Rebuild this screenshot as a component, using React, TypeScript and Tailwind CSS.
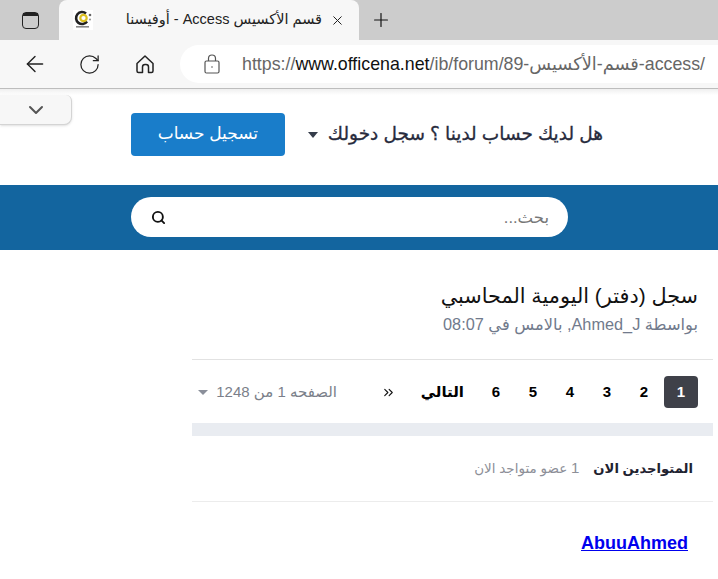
import { ChevronDown, Plus, RotateCw, Search, X, ArrowLeft, ChevronsRight } from "lucide-react"

const font = { fontFamily: '"Liberation Sans", "DejaVu Sans", sans-serif' }

function Favicon() {
  return (
    <svg width="20" height="20" viewBox="0 0 20 20" className="bg-white">
      <path d="M13 3.5a6 6 0 1 0 1 8" fill="none" stroke="#222" strokeWidth="2.6" />
      <circle cx="10.5" cy="8" r="3.2" fill="none" stroke="#dcc020" strokeWidth="2.2" />
      <circle cx="17" cy="5" r="1.3" fill="#666" />
      <circle cx="17" cy="9.5" r="1.1" fill="#999" />
      <rect x="3" y="16" width="13" height="1.6" fill="#888" />
    </svg>
  )
}

function HomeIcon() {
  return (
    <svg width="22" height="22" viewBox="0 0 22 22" fill="none" stroke="#222" strokeWidth="1.5" strokeLinejoin="round">
      <path d="M3 10.5 11 3l8 7.5V18a1.5 1.5 0 0 1-1.5 1.5h-3V14a2.5 2.5 0 0 0-2.5-2.5h-1A2.5 2.5 0 0 0 8.500 14v5.500h-4A1.500 1.500 0 0 1 3 18z" />
    </svg>
  )
}

function LockIcon() {
  return (
    <svg width="16" height="20" viewBox="0 0 16 20" fill="none" stroke="#555" strokeWidth="1.2">
      <rect x="1" y="7" width="14" height="12" rx="1.5" />
      <path d="M4.500 7V4.500a3.500 3.500 0 0 1 7 0V7" />
      <circle cx="8" cy="13" r="0.8" fill="#555" stroke="none" />
    </svg>
  )
}

function BrowserBar() {
  return (
    <div>
      <div className="flex h-10 bg-[#cccccc]">
        <div className="flex w-[59px] items-center justify-center pl-[2px]">
          <div className="h-[17px] w-[17px] rounded-[4px] border-[1.5px] border-[#222]">
            <div className="h-[3px] bg-[#222]" />
          </div>
        </div>
        <div className="flex w-[300px] items-center rounded-t-[8px] bg-[#f7f7f7] pl-[14px] pr-[14px]">
          <Favicon />
          <span dir="rtl" className="ml-[32px] w-[197px] whitespace-nowrap text-[14.500px] text-[#222]">
            قسم الأكسيس Access - أوفيسنا
          </span>
          <X size={15} strokeWidth={1.6} className="ml-auto text-[#222]" />
        </div>
        <div className="flex w-[44px] items-center justify-center">
          <Plus size={22} strokeWidth={1.3} className="text-[#111]" />
        </div>
      </div>
      <div className="flex h-[48px] items-center bg-[#f7f7f7] pl-[22px]">
        <ArrowLeft size={26} strokeWidth={1.3} className="text-[#222]" />
        <RotateCw size={23} strokeWidth={1.3} className="ml-[30px] text-[#222]" />
        <div className="ml-[33px]">
          <HomeIcon />
        </div>
        <div className="ml-[24px] flex h-[38px] flex-1 items-center rounded-l-full bg-white pl-6">
          <LockIcon />
          <div className="ml-[22px] whitespace-nowrap text-[17.800px] text-[#666]">
            https://<span className="text-[#111]">www.officena.net</span>/ib/forum/89-قسم-الأكسيس-access/
          </div>
        </div>
      </div>
      <div className="h-[1px] bg-[#bdbdbd]" />
    </div>
  )
}

function PageLink({ label, active }: { label: string; active?: boolean }) {
  return (
    <div
      className={
        active
          ? "flex h-8 w-[34px] items-center justify-center rounded bg-[#3f4149] text-[15px] font-bold text-white"
          : "flex h-8 w-[34px] items-center justify-center text-[15px] font-bold text-black"
      }
    >
      {label}
    </div>
  )
}

export default function App() {
  return (
    <div className="h-[579px] w-[718px] overflow-hidden bg-white" style={font}>
      <BrowserBar />
      <div className="relative">
        <div className="absolute inset-x-0 top-0 h-[6px] bg-gradient-to-b from-[#efefef] to-white" />
        <div className="absolute left-0 top-[6px] flex h-[30px] w-[72px] items-center justify-center rounded-br-[8px] rounded-tr-[6px] border-b border-r border-[#d4d4d4] bg-[#f7f7f7] shadow-sm">
          <ChevronDown size={24} strokeWidth={2} className="text-[#555]" />
        </div>

        <div dir="rtl" className="flex h-[96px] items-center gap-[23px] pb-[6px] pr-[115px]">
          <div className="flex items-center gap-[10px] text-[18.500px] text-[#272b3d] [-webkit-text-stroke:0.3px_#272b3d]">
            <span>هل لديك حساب لدينا ؟ سجل دخولك</span>
            <span className="mt-[1px] h-0 w-0 border-x-[5.500px] border-t-[6px] border-x-transparent border-t-[#353c4a]" />
          </div>
          <div className="flex h-[43px] w-[154px] items-center justify-center rounded bg-[#197dca] text-[17px] text-white">
            تسجيل حساب
          </div>
        </div>

        <div className="flex h-[65px] items-center bg-[#13659f] pb-[1px] pl-[131px]">
          <div className="flex h-10 w-[437px] items-center justify-between rounded-full bg-white pl-5 pr-[19px]">
            <Search size={15} strokeWidth={3} className="text-[#111]" />
            <span dir="rtl" className="text-[16.500px] text-[#777]">بحث...</span>
          </div>
        </div>

        <div dir="rtl" className="px-5 pt-[33px]">
          <div className="text-[20.800px] leading-[26px] text-[#111]">سجل (دفتر) اليومية المحاسبي</div>
          <div className="mt-[4px] text-[16.300px] leading-[22px] text-[#717a8c]">بواسطة Ahmed_J, بالامس في 08:07</div>
        </div>

        <div className="ml-[192px] mr-[5px] mt-[24px]">
          <div dir="rtl" className="flex h-[64px] items-center border-t border-[#e2e2e2] pr-[15px] pt-[1px]">
            <div className="flex items-center gap-[3px]">
              <PageLink label="1" active />
              <PageLink label="2" />
              <PageLink label="3" />
              <PageLink label="4" />
              <PageLink label="5" />
              <PageLink label="6" />
              <div className="mr-[12px] w-[42px] text-center text-[15px] font-bold text-black">التالي</div>
              <ChevronsRight size={15} strokeWidth={1.8} className="mr-[23px] text-[#111]" />
            </div>
            <div className="mr-[44px] flex items-center gap-[8px] text-[15px] text-[#7b7f8a]">
              <span>الصفحه 1 من 1248</span>
              <span className="h-0 w-0 border-x-[5px] border-t-[5px] border-x-transparent border-t-[#8a8f9a]" />
            </div>
          </div>
          <div className="h-[13px] bg-[#e9ecf1]" />
          <div dir="rtl" className="flex h-[66px] items-center gap-[14px] border-b border-[#ececec] pr-5">
            <span className="text-[13.200px] font-bold text-[#1f2230]">المتواجدين الان</span>
            <span className="text-[13.500px] text-[#8d8f98]">
              <span className="text-[15px]">1</span> عضو متواجد الان
            </span>
          </div>
          <div dir="rtl" className="pr-[25px] pt-[29px]">
            <a href="#" className="text-[18px] font-bold leading-6 text-[#0000ee] underline">AbuuAhmed</a>
          </div>
        </div>
      </div>
    </div>
  )
}
